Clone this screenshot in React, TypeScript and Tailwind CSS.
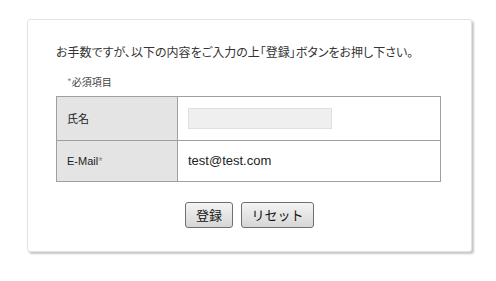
export default function App() {
  const jp = "font-['Noto_Sans_CJK_JP','Liberation_Sans',sans-serif]";
  return (
    <div className={`min-h-[281px] w-[496px] bg-white pt-[19px] pl-[27px] ${jp}`}>
      <div className="h-[233px] w-[445px] rounded-[3px] border border-[#e2e2e2] bg-white shadow-[2px_2px_2px_rgba(0,0,0,0.22)]">
        <p className="pl-[28px] pt-[23px] text-[12px] leading-[18px] text-[#333] [font-feature-settings:'palt']">
          お手数ですが、以下の内容をご入力の上「登録」ボタンをお押し下さい。
        </p>
        <p className="mt-[14px] pl-[39px] text-[10px] leading-[14px] text-[#444]">
          <span className="text-[#7f8f9e]">*</span>必須項目
        </p>
        <table className="ml-[28px] mt-[7px] w-[385px] border-collapse border border-[#a0a0a0] text-[#222]">
          <tbody>
            <tr className="h-[44px]">
              <th className="w-[121px] border border-[#a0a0a0] bg-[#e4e4e4] pl-[10px] text-left text-[11px] font-normal">氏名</th>
              <td className="border border-[#a0a0a0] pl-[10px]">
                <div className="h-[21px] w-[144px] border border-[#e0e0e0] bg-[#efefef]" />
              </td>
            </tr>
            <tr className="h-[41px]">
              <th className="border border-[#a0a0a0] bg-[#e4e4e4] pl-[10px] text-left text-[11px] font-normal font-['Liberation_Sans',sans-serif]">
                E-Mail<span className="text-[#7f8f9e]">*</span>
              </th>
              <td className="border border-[#a0a0a0] pl-[10px] text-[13px] font-['Liberation_Sans',sans-serif]">test@test.com</td>
            </tr>
          </tbody>
        </table>
        <div className="mt-[20px] flex justify-center gap-[8px]">
          <button className="h-[26px] w-[48px] rounded-[3px] border border-[#707070] bg-gradient-to-b from-[#f4f4f4] to-[#d6d6d6] text-[13px] text-[#111]">登録</button>
          <button className="h-[26px] w-[73px] rounded-[3px] border border-[#707070] bg-gradient-to-b from-[#f4f4f4] to-[#d6d6d6] text-[13px] text-[#111]">リセット</button>
        </div>
      </div>
    </div>
  );
}
